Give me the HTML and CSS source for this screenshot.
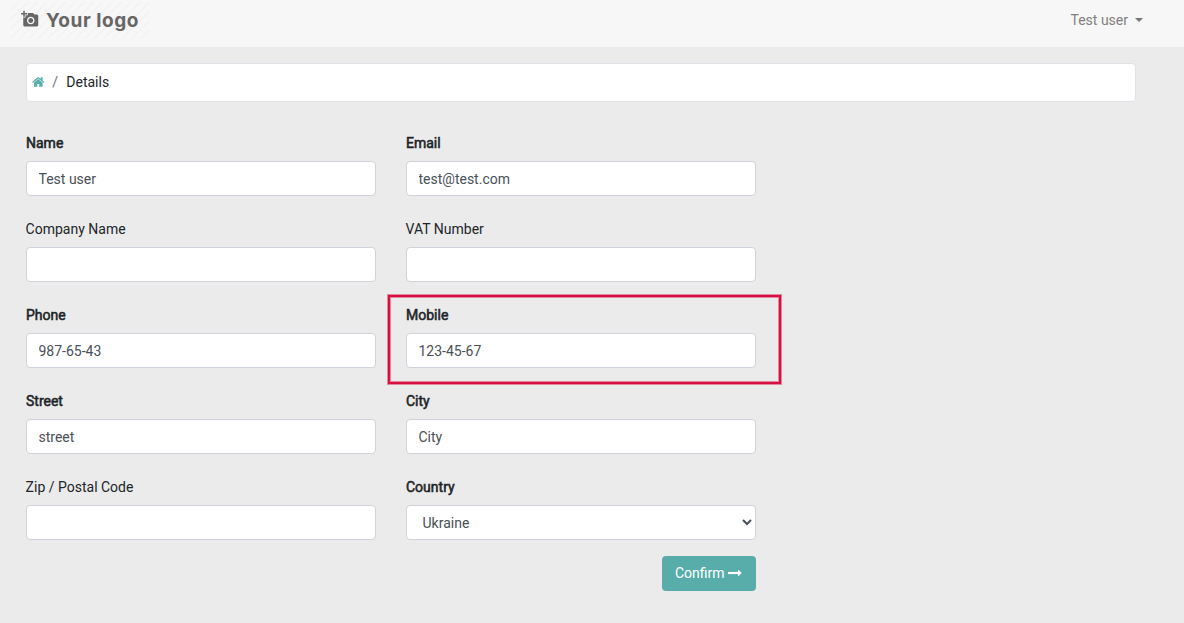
FILE: index.html
```html
<!DOCTYPE html>
<html lang="en">
<head>
<meta charset="utf-8">
<title>Details</title>
<link rel="stylesheet" href="styles.css">
</head>
<body>
<header class="navbar">
  <a class="brand">
    <svg class="brand-icon" viewBox="0 0 24 24"><path fill-rule="evenodd" d="M3 4V1h2v3h3v2H5v3H3V6H0V4h3zm3 6V7h3V4h7l1.83 2H21c1.1 0 2 .9 2 2v12c0 1.1-.9 2-2 2H5c-1.1 0-2-.9-2-2V10h3zm7 9c2.76 0 5-2.24 5-5s-2.24-5-5-5-5 2.24-5 5 2.24 5 5 5zm-3.2-5c0 1.77 1.43 3.2 3.2 3.2s3.2-1.43 3.2-3.2-1.43-3.2-3.2-3.2-3.2 1.43-3.2 3.2z"/></svg>
    <span class="brand-text">Your logo</span>
  </a>
  <a class="user-menu">Test user<span class="caret"></span></a>
</header>
<main class="container">
  <nav class="breadcrumb">
    <svg class="home" viewBox="0 0 1664 1792"><path d="M1408 992v480q0 26-19 45t-45 19H960v-384H704v384H320q-26 0-45-19t-19-45V992q0-1 .5-3t.5-3l575-474 575 474q1 2 1 6zm223-69l-62 74q-8 9-21 11h-3q-13 0-21-7L832 424l-692 577q-12 8-24 7-13-2-21-11l-62-74q-8-10-7-23.5T37 878l719-599q32-26 76-26t76 26l244 204V288q0-14 9-23t23-9h192q14 0 23 9t9 23v408l219 182q10 8 11 21.5t-7 23.5z"/></svg>
    <span class="separator">/</span>
    <span>Details</span>
  </nav>
  <form class="details">
    <div class="field"><label class="required" for="name">Name</label><input id="name" value="Test user"></div>
    <div class="field"><label class="required" for="email">Email</label><input id="email" value="test@test.com"></div>
    <div class="field"><label for="company">Company Name</label><input id="company"></div>
    <div class="field"><label for="vat">VAT Number</label><input id="vat"></div>
    <div class="field"><label class="required" for="phone">Phone</label><input id="phone" value="987-65-43"></div>
    <div class="field highlighted"><label class="required" for="mobile">Mobile</label><input id="mobile" value="123-45-67"></div>
    <div class="field"><label class="required" for="street">Street</label><input id="street" value="street"></div>
    <div class="field"><label class="required" for="city">City</label><input id="city" value="City"></div>
    <div class="field"><label for="zip">Zip / Postal Code</label><input id="zip"></div>
    <div class="field"><label class="required" for="country">Country</label><select id="country"><option>Ukraine</option></select></div>
    <div class="actions">
      <button type="button" class="confirm">Confirm <svg class="arrow" viewBox="0 0 1792 1792"><path d="M1728 893q0 14-10 24l-384 354q-16 14-35 6-19-9-19-29v-224H32q-14 0-23-9t-9-23V800q0-14 9-23t23-9h1248V544q0-21 19-29t35 5l384 350q10 10 10 23z"/></svg></button>
    </div>
  </form>
</main>
</body>
</html>
```

FILE: styles.css
```css
* { box-sizing: border-box; }
body {
  margin: 0;
  min-height: 623px;
  background: #ebebeb;
  color: #212529;
  font: 14px/21px Roboto, "Liberation Sans", sans-serif;
}
.navbar {
  display: flex;
  justify-content: space-between;
  align-items: flex-start;
  height: 47px;
  padding: 2px 41px 0 11px;
  background: #f7f7f7;
}
.brand {
  display: flex;
  align-items: center;
  width: 138px;
  height: 37px;
  padding: 0 0 2px 10px;
  background: repeating-linear-gradient(135deg, #f7f7f7 0 4.6px, #f2f2f2 5.2px 6px, #f7f7f7 6.6px);
}
.brand-icon { flex: none; width: 18px; height: 18px; margin-bottom: 1px; fill: #666; }
.brand-text {
  margin: 2px 0 0 7px;
  color: #666;
  font: 700 19px/24px Inter, sans-serif;
  letter-spacing: 0.55px;
  white-space: nowrap;
}
.user-menu {
  display: flex;
  align-items: center;
  margin-top: 8px;
  color: #808080;
}
.caret {
  margin: 0 0 2px 7px;
  border: 4.5px solid transparent;
  border-top-color: #777;
  border-bottom: 0;
}
.container { padding: 16px 48px 0 26px; }
.breadcrumb {
  display: flex;
  align-items: center;
  height: 39px;
  padding: 0 5px 1px;
  background: #fff;
  border: 1px solid #dee2e6;
  border-radius: 4px;
}
.home { width: 12.5px; height: 14px; fill: #58adaa; }
.separator { margin: 0 8.3px 0 7.7px; color: #6c757d; }
.details {
  display: grid;
  grid-template-columns: 350px 350px;
  column-gap: 30px;
  margin-top: 31px;
}
.field { position: relative; height: 86px; }
.field label { display: block; margin: 0 0 7px -0.4px; }
.field .required { margin-left: 0; -webkit-text-stroke: 0.55px #212529; }
.field input,
.field select {
  display: block;
  width: 100%;
  height: 35px;
  padding: 6px 11.5px;
  color: #495057;
  background: #fff;
  border: 1px solid #ced4da;
  border-radius: 4px;
  font: inherit;
}
.highlighted::before {
  content: "";
  position: absolute;
  inset: -10px -25px 7px -18px;
  border: 2px solid #d80f41;
  box-shadow: 0 0 0 1px rgba(216, 15, 65, 0.45), inset 0 0 0 1px rgba(216, 15, 65, 0.45);
  pointer-events: none;
}
.actions {
  grid-column: 2;
  display: flex;
  justify-content: flex-end;
  margin-top: -7px;
}
.confirm {
  display: flex;
  align-items: center;
  gap: 3.5px;
  width: 94px;
  height: 35px;
  padding: 0 13px;
  color: #fff;
  background: #58adaa;
  border: 0;
  border-radius: 4px;
  font: inherit;
}
.arrow { flex: none; width: 14px; height: 14px; margin-bottom: 1px; fill: #fff; stroke: #fff; stroke-width: 20; }
```
